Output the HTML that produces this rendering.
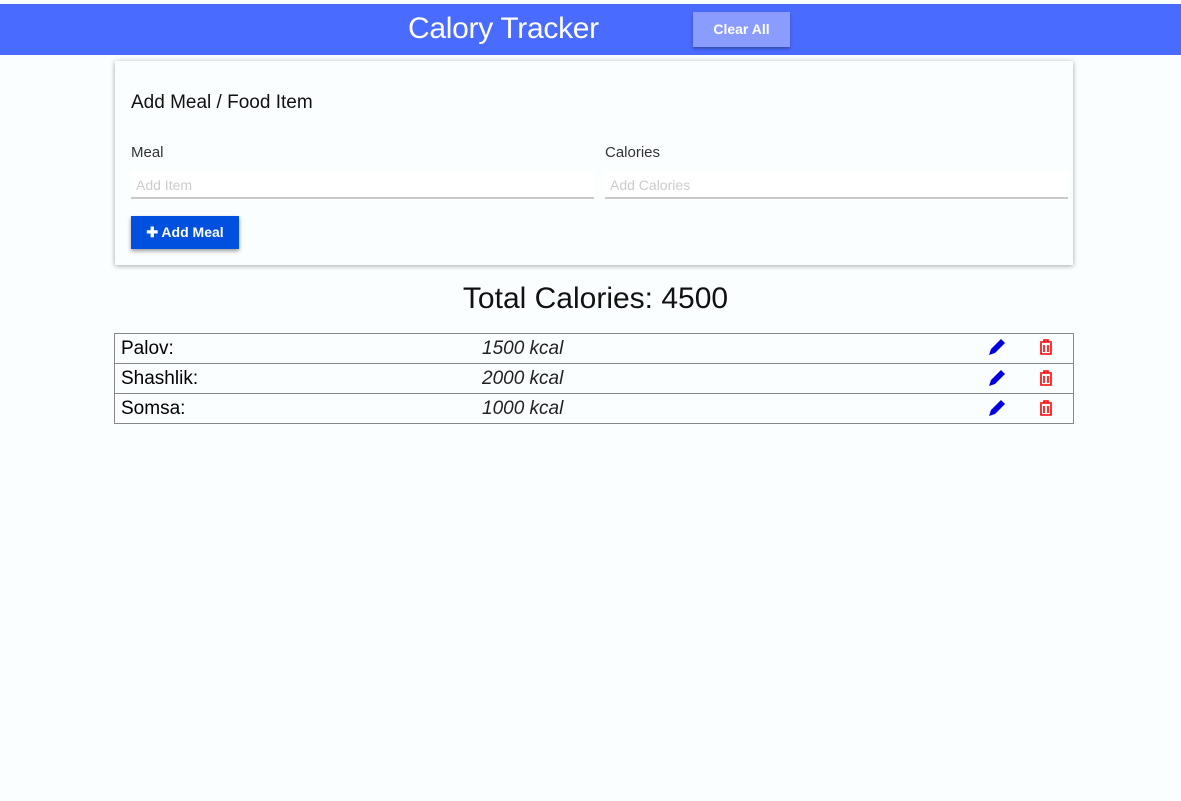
<!DOCTYPE html>
<html><head><style>
body{margin:0;background:#fbfeff;font-family:"Liberation Sans",sans-serif;width:1181px;height:801px;overflow:hidden;position:relative}
.hdr{position:absolute;left:0;top:4px;width:1181px;height:51px;background:#4a6bff}
.title{position:absolute;left:408px;top:8px;color:#fff;font-size:30px;letter-spacing:-0.3px}
.clr{position:absolute;left:693px;top:8px;width:97px;height:35px;background:#8a9dff;color:#fff;font-weight:bold;font-size:14px;text-align:center;line-height:35px;box-shadow:0 2px 3px rgba(0,0,0,.3)}
.card{position:absolute;left:115px;top:61px;width:958px;height:204px;background:#fbfeff;box-shadow:0 1px 5px rgba(0,0,0,.35)}
.h{position:absolute;left:16px;top:31px;font-size:19px;color:#111}
.lbl{position:absolute;top:83px;font-size:15px;color:#333}
.inp{position:absolute;top:110px;height:28px;width:463px;background:#fff;border-bottom:2px solid #c8c8c8;color:#ccc;font-size:14px;line-height:28px;box-sizing:border-box;padding-left:5px}
.add{position:absolute;left:16px;top:155px;width:108px;height:33px;background:#0050e0;color:#fff;font-weight:bold;font-size:14px;text-align:center;line-height:33px;box-shadow:0 2px 4px rgba(0,0,0,.4)}
.tot{position:absolute;left:0;width:1181px;top:282px;text-align:center;font-size:30px;color:#111;padding-left:10px;box-sizing:border-box}
table{position:absolute;left:114px;top:333px;width:960px;border-collapse:collapse}
td{border:1px solid #888;border-left:none;border-right:none;height:29px;padding:0;font-size:19px}
tr td:first-child{border-left:1px solid #888;padding-left:6px}
tr td:last-child{border-right:1px solid #888}
.k{font-style:italic;color:#222;padding-left:6px}
</style></head><body>
<div class="hdr"><div class="title">Calory Tracker</div><div class="clr">Clear All</div></div>
<div class="card">
<div class="h">Add Meal / Food Item</div>
<div class="lbl" style="left:16px">Meal</div>
<div class="lbl" style="left:490px">Calories</div>
<div class="inp" style="left:16px">Add Item</div>
<div class="inp" style="left:490px">Add Calories</div>
<div class="add">✚ Add Meal</div>
</div>
<div class="tot">Total Calories: 4500</div>
<table>
<tr><td style="width:355px">Palov:</td><td class="k">1500 kcal</td><td style="width:100px"></td></tr>
<tr><td>Shashlik:</td><td class="k">2000 kcal</td><td></td></tr>
<tr><td>Somsa:</td><td class="k">1000 kcal</td><td></td></tr>
</table>
<svg style="position:absolute;left:0;top:0" width="1181" height="801">
<g id="ic">
<path d="M989 355 L991 349 L1001 339 L1005 343 L995 353 Z" fill="#0000e0"/>
<path d="M1040 342h12M1044 342v-2h4v2M1041 343v11h10v-11M1044 345v7M1048 345v7" stroke="#f00" stroke-width="1.6" fill="none"/>
</g>
<use href="#ic" y="31"/><use href="#ic" y="61"/>
</svg>
</body></html>
